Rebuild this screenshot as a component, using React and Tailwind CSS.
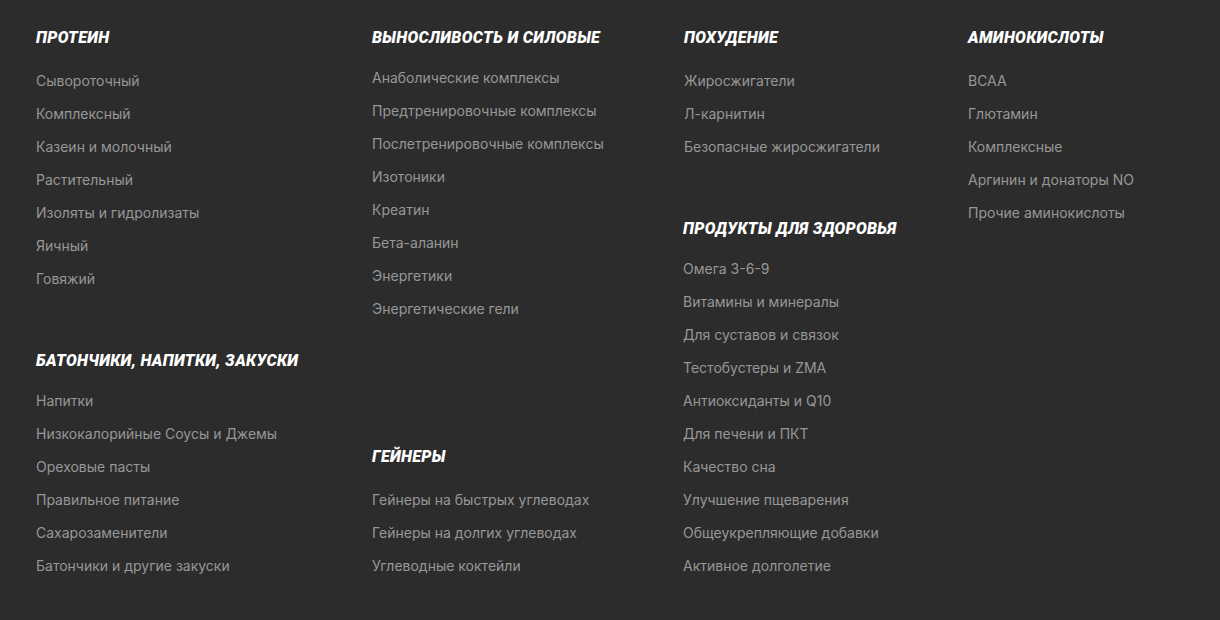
// Catalog footer menu: four columns of categories

const headFont = { fontFamily: 'Roboto, "Noto Sans", sans-serif' };

function Section({ title, items, className = '', gap = 'mt-[23px]' }) {
  return (
    <div className={className}>
      <h3
        className="pt-px text-[16px] leading-5 font-black italic uppercase text-white tracking-[0.02em]"
        style={headFont}
      >
        {title}
      </h3>
      <ul className={`${gap} flex flex-col gap-[13px]`}>
        {items.map((it) => (
          <li key={it} className="text-[14px] leading-5 text-[#979797]">
            <a href="#" className="hover:text-white">{it}</a>
          </li>
        ))}
      </ul>
    </div>
  );
}

export default function App() {
  return (
    <div
      className="w-full h-[620px] bg-[#2c2c2c] pl-9 pt-[27px] flex items-start"
      style={{ fontFamily: 'Inter, "Noto Sans", sans-serif' }}
    >
      <div className="w-[336px] flex flex-col">
        <Section
          title="Протеин"
          items={['Сывороточный', 'Комплексный', 'Казеин и молочный', 'Растительный', 'Изоляты и гидролизаты', 'Яичный', 'Говяжий']}
        />
        <Section
          className="mt-[61px]"
          title="Батончики, напитки, закуски"
          gap="mt-[20px]"
          items={['Напитки', 'Низкокалорийные Соусы и Джемы', 'Ореховые пасты', 'Правильное питание', 'Сахарозаменители', 'Батончики и другие закуски']}
        />
      </div>

      <div className="w-[312px] flex flex-col">
        <Section
          title="Выносливость и силовые"
          gap="mt-[20px]"
          items={['Анаболические комплексы', 'Предтренировочные комплексы', 'Послетренировочные комплексы', 'Изотоники', 'Креатин', 'Бета-аланин', 'Энергетики', 'Энергетические гели']}
        />
        <Section
          className="mt-[127px]"
          title="Гейнеры"
          items={['Гейнеры на быстрых углеводах', 'Гейнеры на долгих углеводах', 'Углеводные коктейли']}
        />
      </div>

      <div className="w-[284px] flex flex-col">
        <Section
          title="Похудение"
          items={['Жиросжигатели', 'Л-карнитин', 'Безопасные жиросжигатели']}
        />
        <Section
          className="mt-[61px] -ml-px"
          title="Продукты для здоровья"
          gap="mt-[20px]"
          items={['Омега 3-6-9', 'Витамины и минералы', 'Для суставов и связок', 'Тестобустеры и ZMA', 'Антиоксиданты и Q10', 'Для печени и ПКТ', 'Качество сна', 'Улучшение пщеварения', 'Общеукрепляющие добавки', 'Активное долголетие']}
        />
      </div>

      <div className="flex flex-col">
        <Section
          title="Аминокислоты"
          items={['BCAA', 'Глютамин', 'Комплексные', 'Аргинин и донаторы NO', 'Прочие аминокислоты']}
        />
      </div>
    </div>
  );
}
